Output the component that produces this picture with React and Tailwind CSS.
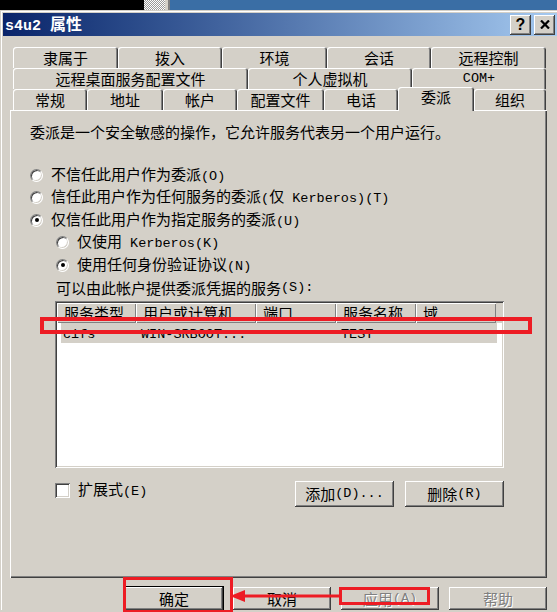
import React from 'react'

/**
 * s4u2 属性 — 委派 tab of the AD user properties dialog (Win2k-style chrome).
 */

// bevel helpers, written out in full so Tailwind picks them up
const RAISED = 'shadow-[inset_-1px_-1px_0_#404040,inset_1px_1px_0_#ffffff,inset_-2px_-2px_0_#808080]'
const SUNKEN = 'shadow-[inset_1px_1px_0_#808080,inset_-1px_-1px_0_#ffffff,inset_2px_2px_0_#404040,inset_-2px_-2px_0_#d4d0c8]'

// ASCII runs get the half-width mono face, like SimSun's Latin glyphs
function Mix({ text }) {
  return text.split(/([\x20-\x7e]+)/).map((part, i) =>
    /[\x20-\x7e]/.test(part) ? (
      <span key={i} className="font-['Liberation_Mono',monospace] text-[13.5px]">{part}</span>
    ) : (
      part
    ),
  )
}

const tabRows = [
  [['隶属于', 105], ['拨入', 104], ['环境', 105], ['会话', 104], ['远程控制', 115]],
  [['远程桌面服务配置文件', 235], ['个人虚拟机', 164], ['COM+', 134]],
  [['常规', 74], ['地址', 76], ['帐户', 74], ['配置文件', 87], ['电话', 74], ['委派', 76, true], ['组织', 72]],
]

const columns = [
  ['服务类型', 79],
  ['用户或计算机', 120],
  ['端口', 80],
  ['服务名称', 80],
  ['域', 80],
]

function Tabs() {
  return (
    <div className="ml-[3px] w-[533px]">
      {tabRows.map((row, r) => (
        <div key={r} className="flex h-[21px]">
          {row.map(([label, width, active]) =>
            active ? (
              <div
                key={label}
                style={{ width }}
                className="relative z-10 -mt-[2px] flex h-[24px] items-start justify-center rounded-t-[3px] bg-[#d4d0c8] pt-[1px] leading-[18px] shadow-[inset_1px_1px_0_#ffffff,inset_-1px_0_0_#404040,inset_-2px_0_0_#808080]"
              >
                <Mix text={label} />
              </div>
            ) : (
              <div
                key={label}
                style={{ width }}
                className="flex h-[21px] items-center justify-center rounded-t-[3px] bg-[#d4d0c8] leading-[18px] shadow-[inset_1px_1px_0_#ffffff,inset_-1px_0_0_#404040,inset_-2px_0_0_#808080]"
              >
                <Mix text={label} />
              </div>
            ),
          )}
        </div>
      ))}
    </div>
  )
}

function Radio({ checked, label }) {
  return (
    <div className="flex h-[22.5px] items-center gap-[8px]">
      <span className="flex h-[13px] w-[13px] shrink-0 items-center justify-center rounded-full border border-t-[#808080] border-r-white border-b-white border-l-[#808080] bg-white shadow-[inset_1px_1px_0_#404040,inset_-1px_-1px_0_#d4d0c8]">
        {checked && <span className="h-[4px] w-[4px] rounded-full bg-black" />}
      </span>
      <span className="leading-[18px]">
        <Mix text={label} />
      </span>
    </div>
  )
}

function Button({ label, disabled, isDefault, className = '' }) {
  return (
    <div
      className={`flex h-[23px] w-[98px] items-center justify-center bg-[#d4d0c8] leading-[18px] ${RAISED} ${
        isDefault ? 'outline outline-1 outline-black' : ''
      } ${disabled ? 'text-[#808080] [text-shadow:1px_1px_0_#ffffff]' : ''} ${className}`}
    >
      <Mix text={label} />
    </div>
  )
}

function ServiceList() {
  return (
    <div className={`ml-[25px] mt-[2px] h-[167px] w-[449px] bg-white p-[2px] ${SUNKEN}`}>
      <div className="flex h-[20px] bg-[#d4d0c8]">
        {columns.map(([label, width]) => (
          <div
            key={label}
            style={{ width }}
            className="flex items-center pl-[7px] leading-[18px] shadow-[inset_1px_1px_0_#ffffff,inset_-1px_-1px_0_#808080]"
          >
            {label}
          </div>
        ))}
      </div>
      <div className="ml-[4px] flex h-[20px] w-[436px] items-center bg-[#d4d0c8] pt-[5px] font-['Liberation_Mono',monospace] text-[13.5px]">
        <span className="w-[80px] pl-[2px]">cifs</span>
        <span className="w-[200px]">WIN-SRBOOT...</span>
        <span>TEST</span>
      </div>
    </div>
  )
}

function Annotations() {
  return (
    <>
      <div className="absolute left-[40px] top-[317px] h-[17px] w-[492px] border-4 border-[#ed1c24]" />
      <div className="absolute left-[123px] top-[577px] h-[36px] w-[110px] border-[3px] border-[#ed1c24]" />
      <div className="absolute left-[339px] top-[587px] h-[18px] w-[91px] border-[3px] border-[#ed1c24]" />
      <svg className="absolute left-[228px] top-[588px]" width="112" height="16" viewBox="0 0 112 16">
        <line x1="14" y1="8" x2="111" y2="8" stroke="#ed1c24" strokeWidth="3" />
        <polygon points="2,8 17,2 17,14" fill="#ed1c24" />
      </svg>
    </>
  )
}

export default function App() {
  return (
    <div className="relative h-[612px] w-[557px] overflow-hidden bg-[#d4d0c8] font-['Noto_Sans_CJK_SC',sans-serif] text-[15px] text-black">
      {/* desktop strip peeking above the dialog */}
      <div className="flex h-[10px]">
        <div className="w-[144px] bg-black" />
        <div className="w-[21px] bg-[repeating-conic-gradient(#9a9a9a_0_25%,#ffffff_0_50%)] bg-[length:2px_2px]" />
        <div className="w-[3px] bg-[#d4d0c8]" />
        <div className="w-[2px] bg-[#808080]" />
        <div className="flex-1 bg-[#3a6ea5]" />
      </div>

      <div className="pl-[3px] pt-[3px] shadow-[inset_1px_1px_0_#d4d0c8,inset_2px_2px_0_#ffffff]">
        {/* title bar */}
        <div className="flex h-[23px] items-center bg-gradient-to-r from-[#0a246a] to-[#a6caf0] pl-[2px] pr-[2px]">
          <span className="flex-1 text-[16px] font-bold text-white leading-[18px]">
            <span className="font-['Liberation_Mono',monospace] text-[15px]">s4u2 </span>属性
          </span>
          <div className="flex gap-[3px]">
            <div className={`flex h-[20px] w-[21px] items-center justify-center bg-[#d4d0c8] font-['Liberation_Sans',sans-serif] text-[16px] font-bold leading-none ${RAISED}`}>
              ?
            </div>
            <div className={`flex h-[20px] w-[21px] items-center justify-center bg-[#d4d0c8] ${RAISED}`}>
              <svg width="10" height="9" viewBox="0 0 10 9">
                <path d="M1 0.5 L9 8.5 M9 0.5 L1 8.5" stroke="#000" strokeWidth="2.2" />
              </svg>
            </div>
          </div>
        </div>

        <div className="pl-[7px] pt-[11px]">
          <Tabs />

          {/* tab page */}
          <div className="h-[468px] w-[537px] pl-[20px] pt-[13px] shadow-[inset_1px_1px_0_#ffffff,inset_-1px_-1px_0_#404040,inset_-2px_-2px_0_#808080]">
            <div className="h-[18px] leading-[18px]">委派是一个安全敏感的操作，它允许服务代表另一个用户运行。</div>

            <div className="mt-[23px]">
              <Radio label="不信任此用户作为委派(O)" />
              <Radio label="信任此用户作为任何服务的委派(仅 Kerberos)(T)" />
              <Radio checked label="仅信任此用户作为指定服务的委派(U)" />
              <div className="ml-[26px]">
                <Radio label="仅使用 Kerberos(K)" />
                <Radio checked label="使用任何身份验证协议(N)" />
                <div className="flex h-[22px] items-center leading-[18px]">
                  <Mix text="可以由此帐户提供委派凭据的服务(S):" />
                </div>
              </div>
            </div>

            <ServiceList />

            <div className="ml-[25px] mt-[13px] flex w-[449px] items-start">
              <div className="flex flex-1 items-center gap-[8px]">
                <span className={`h-[15px] w-[15px] bg-white ${SUNKEN}`} />
                <span className="leading-[16px]">
                  <Mix text="扩展式(E)" />
                </span>
              </div>
              <Button label="添加(D)..." className="h-[26px] w-[99px]" />
              <Button label="删除(R)" className="ml-[11px] h-[26px] w-[99px]" />
            </div>
          </div>

          {/* dialog buttons */}
          <div className="ml-[115px] mt-[9px] flex gap-[10px]">
            <Button isDefault label="确定" />
            <Button label="取消" />
            <Button disabled label="应用(A)" />
            <Button disabled label="帮助" />
          </div>
        </div>
      </div>

      <Annotations />
    </div>
  )
}
